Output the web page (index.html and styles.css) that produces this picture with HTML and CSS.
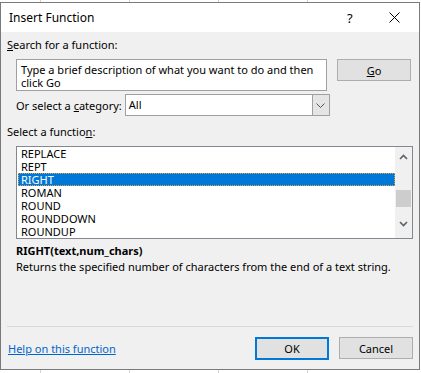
FILE: index.html
```html
<!DOCTYPE html>
<html lang="en">
<head>
    <meta charset="UTF-8">
    <title>Insert Function</title>
    <link rel="stylesheet" href="styles.css">
</head>
<body>

<div class="dialog">
    <div class="titlebar">
        <span class="title">Insert Function</span>
        <span class="help">?</span>
        <span class="close">
            <svg width="11" height="11" viewBox="0 0 11 11"><path d="M0.5 0.5 L10.5 10.5 M10.5 0.5 L0.5 10.5" stroke="#000" stroke-width="1" fill="none"/></svg>
        </span>
    </div>

    <div class="content">
        <div class="label"><u>S</u>earch for a function:</div>
        <div class="search-row">
            <div class="search-box">Type a brief description of what you want to do and then click Go</div>
            <button class="btn"><u>G</u>o</button>
        </div>

        <div class="cat-row">
            <span>Or select a <u>c</u>ategory:</span>
            <div class="select">
                <span class="select-value">All</span>
                <span class="select-arrow">
                    <svg width="9" height="5" viewBox="0 0 9 5"><path d="M0.5 0.5 L4.5 4.5 L8.5 0.5" stroke="#555" stroke-width="1" fill="none"/></svg>
                </span>
            </div>
        </div>

        <div class="label">Select a functio<u>n</u>:</div>
        <div class="list">
            <div class="items">
                <div class="item">REPLACE</div>
                <div class="item">REPT</div>
                <div class="item selected">RIGHT</div>
                <div class="item">ROMAN</div>
                <div class="item">ROUND</div>
                <div class="item">ROUNDDOWN</div>
                <div class="item">ROUNDUP</div>
            </div>
            <div class="scrollbar">
                <svg class="arrow-up" width="9" height="6" viewBox="0 0 9 6"><path d="M1 5 L4.5 1.5 L8 5" stroke="#606060" stroke-width="1.6" fill="none"/></svg>
                <div class="thumb"></div>
                <svg class="arrow-down" width="9" height="6" viewBox="0 0 9 6"><path d="M1 1 L4.5 4.5 L8 1" stroke="#606060" stroke-width="1.6" fill="none"/></svg>
            </div>
        </div>

        <div class="sig">RIGHT(text,num_chars)</div>
        <div class="desc">Returns the specified number of characters from the end of a text string.</div>

        <div class="separator"></div>

        <div class="footer">
            <a class="link" href="#">Help on this function</a>
            <div class="buttons">
                <button class="btn default">OK</button>
                <button class="btn">Cancel</button>
            </div>
        </div>
    </div>
</div>

</body>
</html>
```

FILE: styles.css
```css
body {
    margin: 0;
    padding: 0;
    background-color: #fff;
    background-image:
        linear-gradient(to right, transparent 40px, #d4d4d4 40px, #d4d4d4 41px, transparent 41px),
        linear-gradient(to right, transparent 129px, #d4d4d4 129px, #d4d4d4 130px, transparent 130px),
        linear-gradient(to right, transparent 218px, #d4d4d4 218px, #d4d4d4 219px, transparent 219px),
        linear-gradient(to right, transparent 307px, #d4d4d4 307px, #d4d4d4 308px, transparent 308px);
    font-family: "Noto Sans", "Open Sans", sans-serif;
    font-size: 11px;
    color: #000;
    height: 373px;
    overflow: hidden;
}
.dialog {
    margin-top: 2px;
    width: 418px;
    height: 366px;
    border: 1px solid #7a7a7a;
    background-color: #f0f0f0;
    display: flex;
    flex-direction: column;
}
.titlebar {
    height: 29px;
    background-color: #fff;
    display: flex;
    align-items: center;
    padding-left: 8px;
}
.title {
    flex: 1;
    font-size: 12px;
}
.help {
    width: 42px;
    font-size: 13px;
}
.close {
    width: 30px;
    display: flex;
    align-items: center;
}
.content {
    flex: 1;
    display: flex;
    flex-direction: column;
    padding: 0 6px 0 6px;
}
.label {
    margin-top: 5px;
    line-height: 16px;
}
.search-row {
    display: flex;
    margin-top: 6px;
    padding-left: 9px;
}
.search-box {
    width: 311px;
    border: 1px solid #a0a0a0;
    background-color: #fff;
    padding: 3px 4px 0 4px;
    box-sizing: border-box;
    height: 32px;
    line-height: 13px;
}
.btn {
    font-family: inherit;
    font-size: 11px;
    color: #000;
    background-color: #e1e1e1;
    border: 1px solid #adadad;
    width: 74px;
    height: 22px;
    padding: 0;
    margin-left: 10px;
}
.cat-row {
    display: flex;
    align-items: center;
    margin-top: 3px;
    padding-left: 9px;
}
.select {
    display: flex;
    margin-left: 3px;
    width: 205px;
    height: 22px;
    box-sizing: border-box;
    border: 1px solid #a0a0a0;
    background-color: #fff;
}
.select-value {
    flex: 1;
    padding-left: 3px;
    line-height: 20px;
}
.select-arrow {
    width: 16px;
    background-color: #e5e5e5;
    border-left: 1px solid #a0a0a0;
    display: flex;
    align-items: center;
    justify-content: center;
}
.cat-row + .label {
    margin-top: 8px;
}
.list {
    display: flex;
    margin-top: 6px;
    margin-left: 9px;
    width: 397px;
    height: 93px;
    box-sizing: border-box;
    border: 1px solid #828790;
    background-color: #fff;
}
.items {
    flex: 1;
}
.item {
    height: 13px;
    line-height: 13px;
    padding-left: 4px;
}
.item.selected {
    background-color: #0078d7;
    color: #fff;
    outline: 1px dotted #f0a030;
    outline-offset: -1px;
    margin-left: 1px;
    padding-left: 3px;
}
.scrollbar {
    width: 17px;
    background-color: #f0f0f0;
    display: flex;
    flex-direction: column;
    align-items: center;
}
.arrow-up {
    margin-top: 7px;
}
.thumb {
    width: 15px;
    height: 17px;
    background-color: #cdcdcd;
    margin-top: 30px;
}
.arrow-down {
    margin-top: 14px;
}
.sig {
    font-weight: bold;
    margin-top: 4px;
    padding-left: 9px;
    line-height: 16px;
}
.desc {
    padding-left: 9px;
    line-height: 16px;
}
.separator {
    margin-top: auto;
    height: 1px;
    background-color: #d9d9d9;
}
.footer {
    display: flex;
    align-items: center;
    justify-content: space-between;
    height: 42px;
}
.link {
    color: #0066cc;
    text-decoration: underline;
    margin-left: 1px;
}
.buttons {
    display: flex;
    align-items: center;
    margin-right: 0;
}
.btn.default {
    border: 2px solid #0078d7;
    height: 23px;
    margin-left: 0;
}
```
